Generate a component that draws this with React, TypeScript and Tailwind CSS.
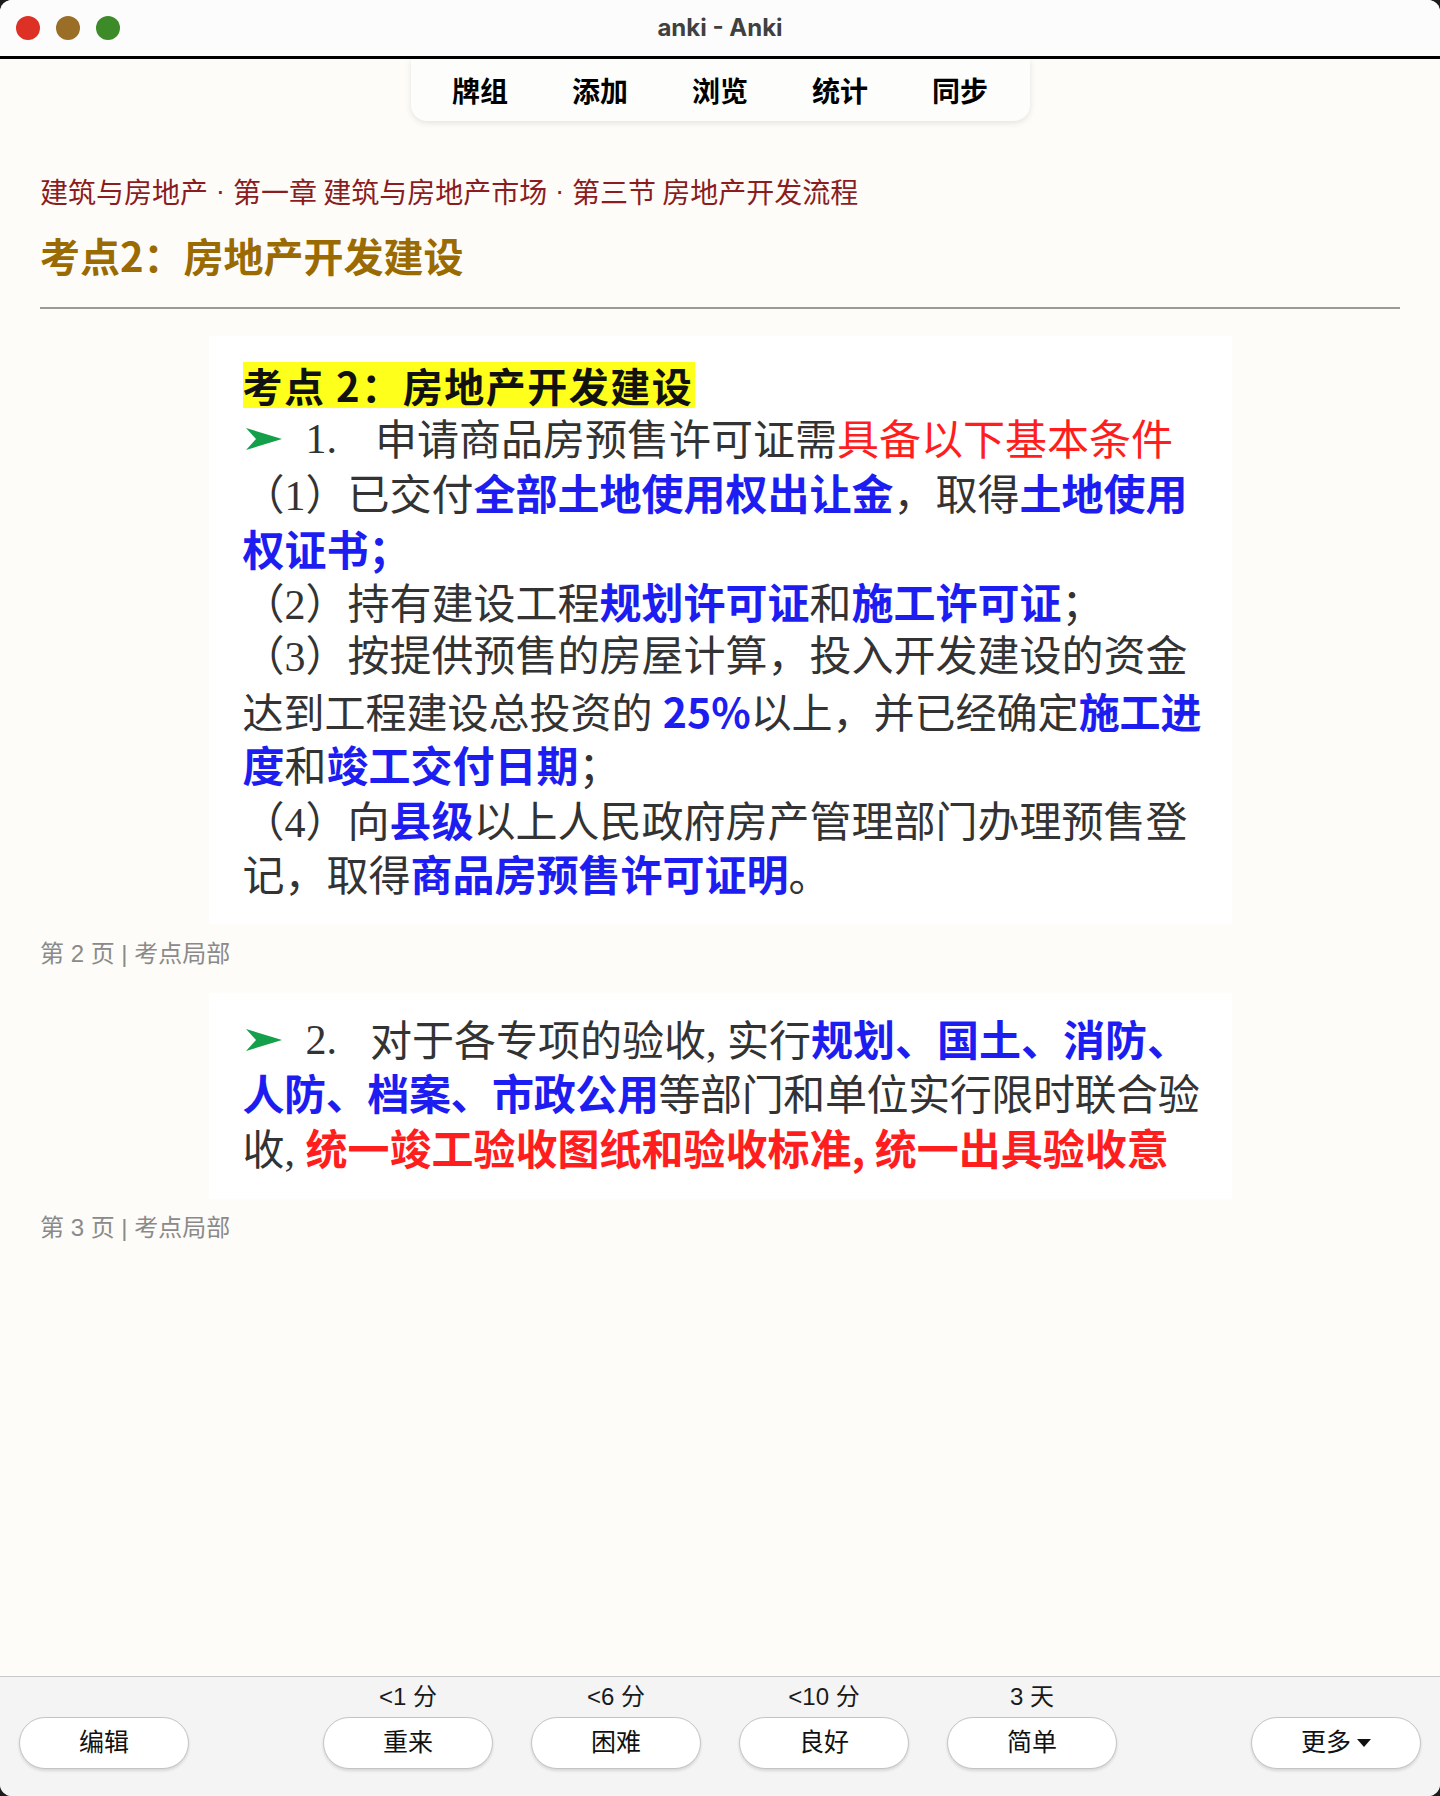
import React from "react";

const CJK = '"Noto Sans CJK SC", "Noto Sans", sans-serif';
const SERIF = '"Liberation Serif", "Noto Sans CJK SC", serif';
const LAT = '"Liberation Sans", "Noto Sans CJK SC", sans-serif';

function Arrow() {
  return (
    <svg width="36" height="22" viewBox="0 0 36 22" className="shrink-0">
      <path d="M0 0 L36 11 L0 22 L10 11 Z" fill="#14a04a" />
    </svg>
  );
}

const B = ({ children }: { children: React.ReactNode }) => (
  <span className="font-bold text-[#1d1df2]" style={{ fontFamily: CJK }}>{children}</span>
);
const R = ({ children, bold }: { children: React.ReactNode; bold?: boolean }) => (
  <span className={`${bold ? "font-bold" : "font-normal"} text-[#ff1e1e]`} style={{ fontFamily: CJK }}>{children}</span>
);

function Line({ children, small }: { children: React.ReactNode; small?: boolean }) {
  return (
    <div className={`flex h-[54.5px] items-center whitespace-nowrap leading-[54px] ${small ? "text-[41px]" : ""}`}>
      {children}
    </div>
  );
}

const Dot = () => <span style={{ fontFamily: LAT }}> · </span>;

export default function App() {
  return (
    <div className="h-[1796px] w-[1440px] bg-[#1c1c1e]">
      <div className="flex h-[1796px] w-[1440px] flex-col overflow-hidden rounded-[12px] bg-[#fdfcf8]">
        {/* title bar */}
        <div className="relative flex h-[59px] shrink-0 items-center justify-center border-b-[3px] border-black bg-[#fcfcfd]">
          <div className="absolute left-[16px] top-[16px] flex gap-[16px]">
            <div className="h-[24px] w-[24px] rounded-full bg-[#dd3126]" />
            <div className="h-[24px] w-[24px] rounded-full bg-[#9a6e27]" />
            <div className="h-[24px] w-[24px] rounded-full bg-[#3d8a29]" />
          </div>
          <div className="text-[24px] font-bold text-[#404040]" style={{ fontFamily: '"Inter", "Noto Sans", sans-serif' }}>
            anki - Anki
          </div>
        </div>

        {/* content */}
        <div className="flex flex-1 flex-col" style={{ fontFamily: CJK }}>
          <div className="flex justify-center">
            <div className="flex h-[62px] w-[619px] items-center justify-center rounded-b-[16px] bg-[#fdfdfc] shadow-[0_2px_6px_rgba(0,0,0,0.10)]">
              {["牌组", "添加", "浏览", "统计", "同步"].map((t) => (
                <div key={t} className="w-[120px] text-center text-[28px] font-bold text-black">
                  {t}
                </div>
              ))}
            </div>
          </div>

          <div className="px-[40px]">
            <div className="mt-[50px] flex h-[40px] items-center whitespace-pre text-[28px] leading-[40px] text-[#8b1c1f]">
              建筑与房地产<Dot />第一章 建筑与房地产市场<Dot />第三节 房地产开发流程
            </div>
            <div className="mt-[18px] h-[52px] text-[40px] font-bold leading-[52px] text-[#9a6a03]">
              考点2：房地产开发建设
            </div>
            <div className="mt-[26px] h-[2px] bg-[#9a9a9a]" />
          </div>

          {/* image 1 */}
          <div className="mx-auto mt-[27px] w-[1023px] bg-white pb-[21px] pl-[34px] pt-[26px] text-[42px] text-[#333333]" style={{ fontFamily: SERIF }}>
            <div className="flex">
              <div className="h-[46px] whitespace-nowrap bg-[#ffff1c] pr-[2px] text-[40px] font-bold leading-[46px] tracking-[1.5px] text-[#111]" style={{ fontFamily: CJK }}>
                考点 2：房地产开发建设
              </div>
            </div>
            <div className="h-[4px]" />
            <Line>
              <span className="ml-[3px]"><Arrow /></span>
              <span className="ml-[24px]">1.</span>
              <span className="ml-[38px]">申请商品房预售许可证需<R>具备以下基本条件</R></span>
            </Line>
            <Line>
              <span>（1）已交付<B>全部土地使用权出让金</B>，取得<B>土地使用</B></span>
            </Line>
            <Line>
              <B>权证书；</B>
            </Line>
            <Line>
              <span>（2）持有建设工程<B>规划许可证</B>和<B>施工许可证</B>；</span>
            </Line>
            <Line>
              <span>（3）按提供预售的房屋计算，投入开发建设的资金</span>
            </Line>
            <Line small>
              <span>达到工程建设总投资的 <B>25%</B>以上，并已经确定<B>施工进</B></span>
            </Line>
            <Line>
              <span><B>度</B>和<B>竣工交付日期</B>；</span>
            </Line>
            <Line>
              <span>（4）向<B>县级</B>以上人民政府房产管理部门办理预售登</span>
            </Line>
            <Line>
              <span>记，取得<B>商品房预售许可证明</B>。</span>
            </Line>
          </div>

          <div className="mt-[15px] h-[30px] px-[40px] text-[24px] leading-[30px] text-[#8a8a8a]" style={{ fontFamily: LAT }}>第 2 页 | 考点局部</div>

          {/* image 2 */}
          <div className="mx-auto mt-[24px] w-[1023px] bg-white pb-[23px] pl-[34px] pt-[20px] text-[42px] text-[#333333]" style={{ fontFamily: SERIF }}>
            <Line>
              <span className="ml-[3px]"><Arrow /></span>
              <span className="ml-[24px]">2.</span>
              <span className="ml-[33px]">对于各专项的验收, 实行<B>规划、国土、消防、</B></span>
            </Line>
            <div className="tracking-[-0.4px]">
              <Line>
                <span><B>人防、档案、市政公用</B>等部门和单位实行限时联合验</span>
              </Line>
            </div>
            <Line>
              <span>收, <R bold>统一竣工验收图纸和验收标准, 统一出具验收意</R></span>
            </Line>
          </div>

          <div className="mt-[14px] h-[30px] px-[40px] text-[24px] leading-[30px] text-[#8a8a8a]" style={{ fontFamily: LAT }}>第 3 页 | 考点局部</div>
          <div className="flex-1" />
        </div>

        {/* bottom bar */}
        <div className="flex h-[120px] shrink-0 items-start justify-between border-t border-[#c9c9c9] bg-[#f4f4f4] px-[19px]" style={{ fontFamily: LAT }}>
          <div className="pt-[40px]">
            <Btn>编辑</Btn>
          </div>
          <div className="flex gap-[38px]">
            {[
              ["<1 分", "重来"],
              ["<6 分", "困难"],
              ["<10 分", "良好"],
              ["3 天", "简单"],
            ].map(([l, t]) => (
              <div key={t} className="flex flex-col items-center">
                <div className="flex h-[34px] items-end text-[24px] leading-[28px] text-[#1a1a1a]">{l}</div>
                <div className="mt-[6px]">
                  <Btn>{t}</Btn>
                </div>
              </div>
            ))}
          </div>
          <div className="pt-[40px]">
            <Btn>
              <span className="flex items-center gap-[6px]">
                更多
                <svg width="14" height="10" viewBox="0 0 14 10">
                  <path d="M0 1 L14 1 L7 9 Z" fill="#111" />
                </svg>
              </span>
            </Btn>
          </div>
        </div>
      </div>
    </div>
  );
}

function Btn({ children }: { children: React.ReactNode }) {
  return (
    <div className="flex h-[52px] w-[170px] items-center justify-center rounded-full border-[1.5px] border-[#c4c4c4] bg-white text-[25px] text-[#111] shadow-[0_2px_3px_rgba(0,0,0,0.12)]">
      {children}
    </div>
  );
}
